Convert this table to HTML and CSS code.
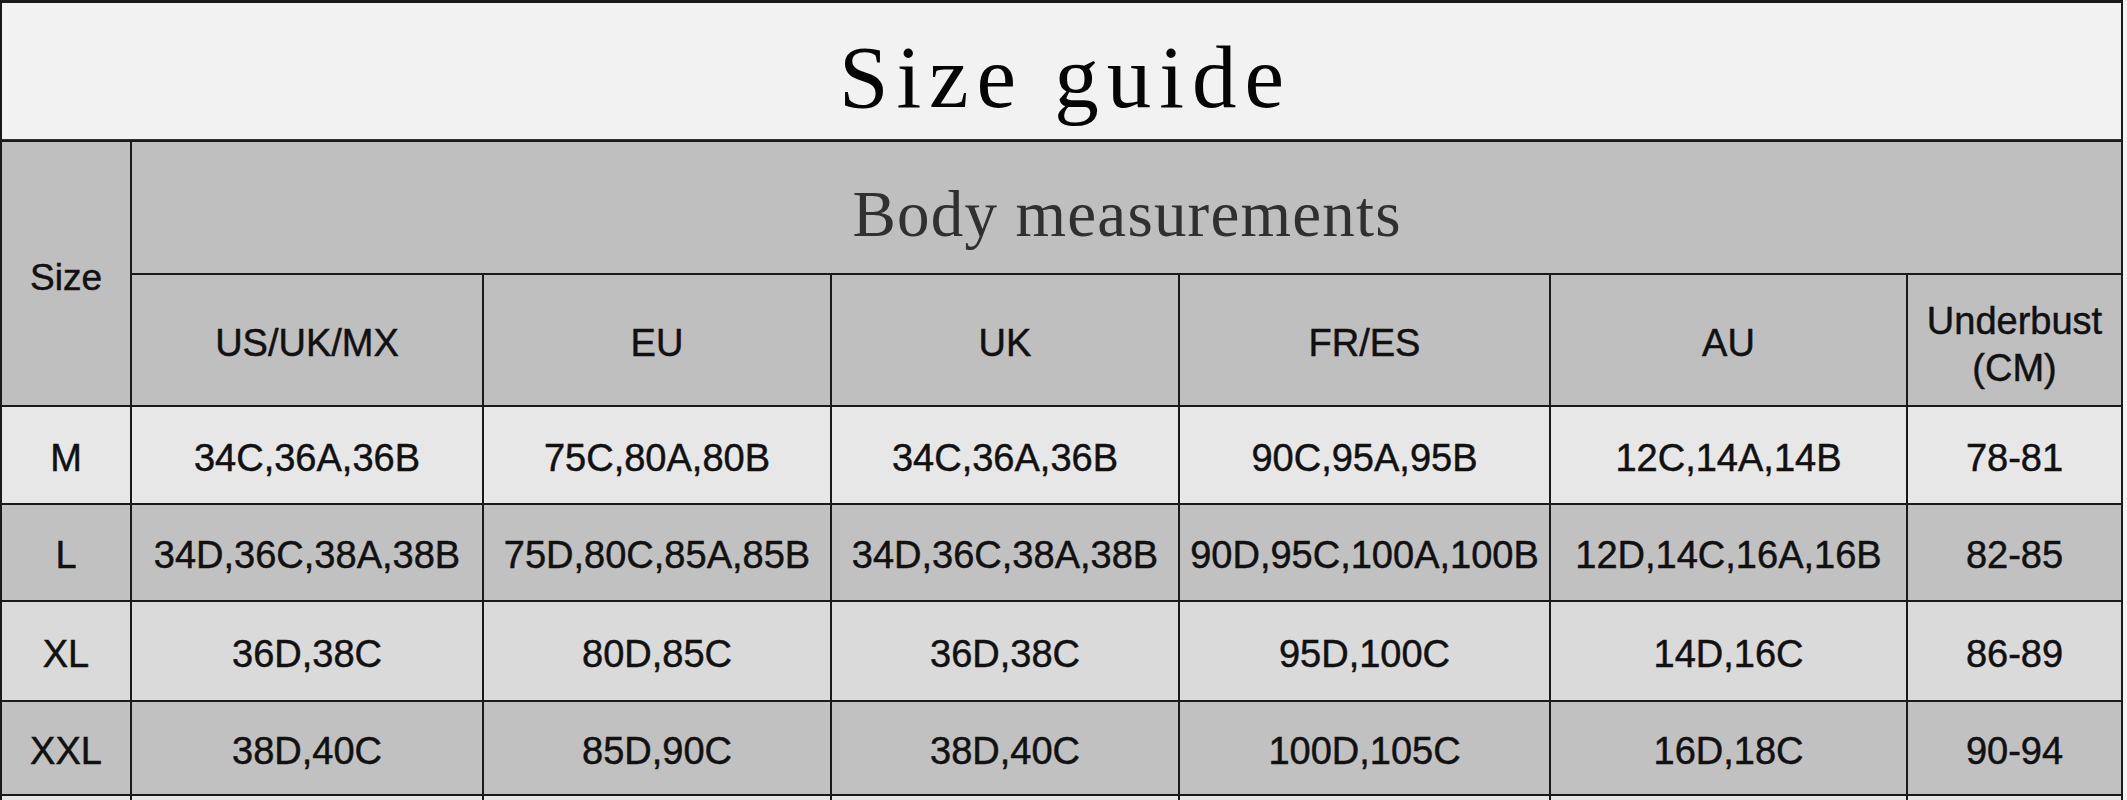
FILE: index.html
```html
<!DOCTYPE html>
<html lang="en">
<head>
<meta charset="utf-8">
<title>Size guide</title>
<link rel="stylesheet" href="styles.css">
</head>
<body>
<div class="chart">
  <div class="cell title"><span class="serif big">Size guide</span></div>

  <div class="cell head size-head">Size</div>
  <div class="cell head body-head"><span class="serif mid">Body measurements</span></div>

  <div class="cell head">US/UK/MX</div>
  <div class="cell head">EU</div>
  <div class="cell head">UK</div>
  <div class="cell head">FR/ES</div>
  <div class="cell head">AU</div>
  <div class="cell head two-line">Underbust<br>(CM)</div>

  <div class="cell r-m">M</div>
  <div class="cell r-m">34C,36A,36B</div>
  <div class="cell r-m">75C,80A,80B</div>
  <div class="cell r-m">34C,36A,36B</div>
  <div class="cell r-m">90C,95A,95B</div>
  <div class="cell r-m">12C,14A,14B</div>
  <div class="cell r-m">78-81</div>

  <div class="cell r-l">L</div>
  <div class="cell r-l">34D,36C,38A,38B</div>
  <div class="cell r-l">75D,80C,85A,85B</div>
  <div class="cell r-l">34D,36C,38A,38B</div>
  <div class="cell r-l">90D,95C,100A,100B</div>
  <div class="cell r-l">12D,14C,16A,16B</div>
  <div class="cell r-l">82-85</div>

  <div class="cell r-xl">XL</div>
  <div class="cell r-xl">36D,38C</div>
  <div class="cell r-xl">80D,85C</div>
  <div class="cell r-xl">36D,38C</div>
  <div class="cell r-xl">95D,100C</div>
  <div class="cell r-xl">14D,16C</div>
  <div class="cell r-xl">86-89</div>

  <div class="cell r-xxl">XXL</div>
  <div class="cell r-xxl">38D,40C</div>
  <div class="cell r-xxl">85D,90C</div>
  <div class="cell r-xxl">38D,40C</div>
  <div class="cell r-xxl">100D,105C</div>
  <div class="cell r-xxl">16D,18C</div>
  <div class="cell r-xxl">90-94</div>

  <div class="cell r-m"></div>
  <div class="cell r-m"></div>
  <div class="cell r-m"></div>
  <div class="cell r-m"></div>
  <div class="cell r-m"></div>
  <div class="cell r-m"></div>
  <div class="cell r-m"></div>
</div>
</body>
</html>
```

FILE: styles.css
```css
html, body {
  margin: 0;
  padding: 0;
  background: #f4f4f4;
}

.chart {
  width: 2123px;
  box-sizing: border-box;
  display: grid;
  grid-template-columns: 128px 350px 346px 346px 369px 355px 213px;
  grid-template-rows: 137px 131px 130px 96px 95px 98px 92px 96px;
  gap: 2px;
  padding: 3px 2px 2px 2px;
  background: #1a1a1a;
  font-family: "Liberation Sans", Arial, sans-serif;
  font-size: 38px;
  line-height: 1;
  color: #111;
  -webkit-text-stroke: 0.5px #111;
}

.cell {
  display: flex;
  align-items: center;
  justify-content: center;
  text-align: center;
  white-space: nowrap;
  box-sizing: border-box;
  padding-top: 5px;
}

.title {
  grid-column: 1 / -1;
  background: #f2f2f2;
  padding-top: 12px;
  border-bottom: 1px solid #333;
}

.serif {
  display: inline-block;
  font-family: "Liberation Serif", "Times New Roman", serif;
  line-height: 1;
  -webkit-text-stroke: 0;
}

.big {
  font-size: 89px;
  letter-spacing: 8px;
  margin-right: -8px;
  color: #050505;
}

.mid {
  font-size: 65px;
  letter-spacing: 1.2px;
  margin-right: -1.2px;
  color: #303030;
}

.head {
  background: #bfbfbf;
}

.size-head {
  grid-row: 2 / span 2;
  font-size: 37px;
  padding-top: 8px;
}

.body-head {
  grid-column: 2 / -1;
  padding-top: 13px;
}

.two-line {
  line-height: 1.25;
  padding-top: 10px;
}

.r-m {
  background: #e7e7e7;
}

.r-l {
  background: #c1c1c1;
}

.r-xl {
  background: #dadada;
}

.r-xxl {
  background: #c1c1c1;
}
```
